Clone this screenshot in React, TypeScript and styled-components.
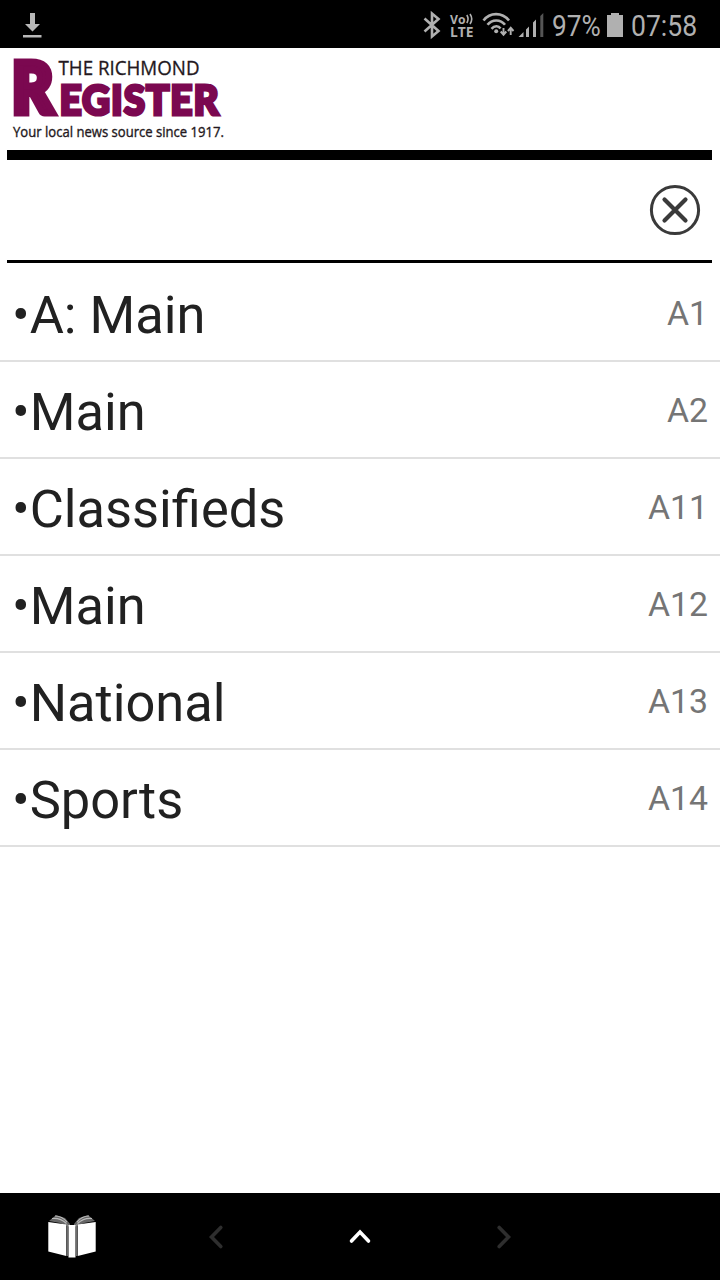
import React from 'react';
import styled, { createGlobalStyle } from 'styled-components';

const GlobalStyle = createGlobalStyle`
  * { box-sizing: border-box; }
  body { margin: 0; background: #fff; font-family: Roboto, sans-serif; }
`;

const Screen = styled.div`
  width: 720px;
  height: 1280px;
  display: flex;
  flex-direction: column;
  background: #fff;
  overflow: hidden;
`;

const StatusBar = styled.div`
  height: 48px;
  flex: none;
  display: flex;
  align-items: center;
  justify-content: space-between;
  background: #000;
  color: #b0b0b0;
`;

const StatusIcons = styled.div`
  display: flex;
  align-items: center;
`;

const StatusText = styled.span<{ $width: number; $stretch: number }>`
  display: block;
  width: ${(p) => p.$width}px;
  font-size: 29.5px;
  line-height: 48px;
  padding-top: 2px;
  height: 48px;
  white-space: nowrap;
  transform: scaleX(${(p) => p.$stretch});
  transform-origin: left center;
`;

const Header = styled.header`
  height: 112px;
  flex: none;
  margin: 0 8px 0 7px;
  border-bottom: 10px solid #000;
`;

const SearchRow = styled.div`
  height: 103px;
  flex: none;
  display: flex;
  align-items: center;
  justify-content: flex-end;
  margin: 0 8px 0 7px;
  padding-right: 11px;
  border-bottom: 3px solid #000;
`;

const ClearButton = styled.button`
  border: 0;
  padding: 0;
  background: none;
  display: flex;
`;

const SectionList = styled.ul`
  flex: 1;
  margin: 0;
  padding: 2px 0 0;
  list-style: none;
`;

const SectionRow = styled.li`
  height: 97px;
  display: flex;
  align-items: center;
  justify-content: space-between;
  padding: 0 12px;
  border-bottom: 2px solid #e0e0e0;
`;

const SectionName = styled.span`
  font-size: 52.4px;
  line-height: 62px;
  padding-top: 4px;
  color: #212121;
`;

const PageLabel = styled.span`
  font-size: 33.8px;
  line-height: 40px;
  padding-top: 3px;
  color: #757575;
`;

const BottomBar = styled.nav`
  height: 87px;
  flex: none;
  display: grid;
  grid-template-columns: repeat(5, 144px);
  align-items: center;
  justify-items: center;
  background: #000;
`;

const NavButton = styled.button`
  border: 0;
  padding: 0;
  background: none;
  display: flex;
`;

const sections = [
  { name: 'A: Main', page: 'A1' },
  { name: 'Main', page: 'A2' },
  { name: 'Classifieds', page: 'A11' },
  { name: 'Main', page: 'A12' },
  { name: 'National', page: 'A13' },
  { name: 'Sports', page: 'A14' },
];

const DownloadIcon = () => (
  <svg width="80" height="48" fill="#b8b8b8">
    <path d="M30 13h5v11h5l-7.500 7.500L25 24h5zM23 35h18.500v2.500H23z" />
  </svg>
);

const SignalIcons = () => (
  <svg width="142" height="48" viewBox="410 0 142 48" fill="none" stroke="#b0b0b0">
    <path d="M424.500 18.500l14 12.500-6.500 5.500V13.500l6.500 5.500-14 12.500" strokeWidth="2.600" />
    <g fill="#b0b0b0" stroke="none" fontFamily="Open Sans, sans-serif" fontWeight="700">
      <text x="450" y="23.500" fontSize="12.500" textLength="15.500" lengthAdjust="spacingAndGlyphs">Vo</text>
      <text x="450" y="37" fontSize="14" textLength="23.500" lengthAdjust="spacingAndGlyphs">LTE</text>
    </g>
    <path d="M466.800 15q2.500 4 0 8M470 14q3.500 5 0 10" strokeWidth="1.600" />
    <g strokeWidth="2.600">
      <path d="M483.500 20.500C490 12 502 12 509 20.500" />
      <path d="M487.500 24.800C492 19 500.500 19 505 24.800" />
      <path d="M491.500 28.800C494.500 25.500 498.500 25.500 500.500 28.500" />
    </g>
    <circle cx="496.200" cy="31.200" r="2" fill="#b0b0b0" stroke="none" />
    <path d="M503.500 28v7M500.700 31.500l2.800 3.200 2.800-3.200M510.700 35v-7M507.900 31l2.800-3.200 2.800 3.200" strokeWidth="1.900" />
    <g fill="#b0b0b0" stroke="none">
      <path d="M518.500 37l5-5v5zM526 29.500l3-3V37h-3zM533 22.500l3-3V37h-3z" />
      <path d="M540.300 16l3-3v24h-3z" fill="#555" />
    </g>
  </svg>
);

const BatteryIcon = () => (
  <svg width="31" height="48" fill="#b0b0b0">
    <path d="M11 13h8v2h4v22H7V15h4z" />
  </svg>
);

const Logo = () => (
  <svg width="225" height="96" viewBox="7 48 225 96">
    <g fill="#7b0850" stroke="#7b0850" fontFamily="Lato, sans-serif" fontWeight="900">
      <text x="12" y="113" fontSize="71" strokeWidth="7" textLength="41" lengthAdjust="spacingAndGlyphs">R</text>
      <text x="59.500" y="114.800" fontSize="42.500" strokeWidth="3.200" textLength="160" lengthAdjust="spacingAndGlyphs" letterSpacing="1">EGISTER</text>
    </g>
    <g fill="#231820" stroke="#231820" fontFamily="Open Sans, sans-serif">
      <text x="58.500" y="74.800" fontSize="20" strokeWidth="0.300" textLength="141" lengthAdjust="spacingAndGlyphs">THE RICHMOND</text>
      <text x="13" y="137.200" fontSize="14" strokeWidth="0.350" textLength="211" lengthAdjust="spacingAndGlyphs">Your local news source since 1917.</text>
    </g>
  </svg>
);

const ClearIcon = () => (
  <svg width="52" height="52" viewBox="0 0 52 52" fill="none" stroke="#3a3a3a">
    <circle cx="26" cy="26" r="23.600" strokeWidth="3" />
    <path d="M15.500 15.500l21 21M36.500 15.500l-21 21" strokeWidth="4.200" strokeLinecap="round" />
  </svg>
);

const BookIcon = () => (
  <svg width="52" height="48" viewBox="46 1213 52 48">
    <path d="M49 1221l7-6 9 3 5 6v3l-10-4zM95 1221l-7-6-9 3-5 6v3l10-4z" fill="#666" />
    <path d="M52 1218.500q8-1 14.500 5M55 1216q7 0 12 6M92 1218.500q-8-1-14.500 5M89 1216q-7 0-12 6" fill="none" stroke="#bbb" strokeWidth="1.100" />
    <path d="M48.300 1222l18 2.500v31.500l-18-4.500zM95.700 1222l-18 2.500v31.500l18-4.500zM68.500 1225h7v32.500h-7z" fill="#fff" />
    <path d="M67.300 1224v32M76.700 1224v32" stroke="#888" strokeWidth="1" />
  </svg>
);

const Chevron = ({ d, color }: { d: string; color: string }) => (
  <svg width="30" height="30" viewBox="0 0 30 30" fill="none" stroke={color} strokeWidth="3.600" strokeLinecap="round">
    <path d={d} />
  </svg>
);

export default function App() {
  return (
    <>
      <GlobalStyle />
      <Screen>
        <StatusBar>
          <DownloadIcon />
          <StatusIcons>
            <SignalIcons />
            <StatusText $width={48} $stretch={0.89}>97%</StatusText>
            <BatteryIcon />
            <StatusText $width={89} $stretch={0.9}>07:58</StatusText>
          </StatusIcons>
        </StatusBar>
        <Header>
          <Logo />
        </Header>
        <SearchRow>
          <ClearButton aria-label="Clear">
            <ClearIcon />
          </ClearButton>
        </SearchRow>
        <SectionList>
          {sections.map((s) => (
            <SectionRow key={s.page}>
              <SectionName>•{s.name}</SectionName>
              <PageLabel>{s.page}</PageLabel>
            </SectionRow>
          ))}
        </SectionList>
        <BottomBar>
          <NavButton aria-label="Pages"><BookIcon /></NavButton>
          <NavButton aria-label="Previous"><Chevron d="M19.800 5.500l-9.300 9.500 9.300 9.500" color="#2e2e2e" /></NavButton>
          <NavButton aria-label="Up"><Chevron d="M6.500 19l8.500-9 8.500 9" color="#fff" /></NavButton>
          <NavButton aria-label="Next"><Chevron d="M10.200 5.500l9.300 9.500-9.300 9.500" color="#2e2e2e" /></NavButton>
        </BottomBar>
      </Screen>
    </>
  );
}
